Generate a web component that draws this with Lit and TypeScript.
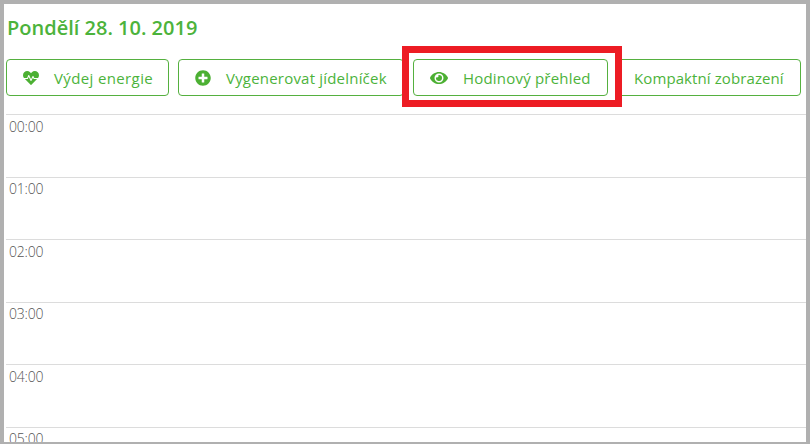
import { LitElement, html, css, svg } from 'lit';
import { customElement } from 'lit/decorators.js';
import { styleMap } from 'lit/directives/style-map.js';

const ICONS = {
  heartbeat: {
    box: '0 0 512 512',
    w: 16,
    d: 'M320.2 243.8l-49.7 99.4c-6 12.1-23.4 11.7-28.9-.6l-56.9-126.3-30 71.7H60.6l182.5 186.5c7.1 7.3 18.6 7.3 25.7 0L451.4 288H342.3l-22.1-44.2zM473.7 73.9l-2.4-2.5c-51.5-52.6-135.8-52.6-187.4 0L256 100l-27.9-28.5c-51.5-52.7-135.9-52.7-187.4 0l-2.4 2.4C-10.4 123.7-12.5 203 31 256h102.4l35.9-86.2c5.4-12.9 23.6-13.2 29.4-.4l58.2 129.3 49-97.9c5.9-11.8 22.7-11.8 28.6 0l27.6 55.2H481c43.5-53 41.4-132.3-7.3-182.1z',
  },
  plus: {
    box: '0 0 512 512',
    w: 16,
    d: 'M256 8C119 8 8 119 8 256s111 248 248 248 248-111 248-248S393 8 256 8zm144 276c0 6.6-5.4 12-12 12h-92v92c0 6.6-5.4 12-12 12h-56c-6.6 0-12-5.4-12-12v-92h-92c-6.6 0-12-5.4-12-12v-56c0-6.6 5.4-12 12-12h92v-92c0-6.6 5.4-12 12-12h56c6.6 0 12 5.4 12 12v92h92c6.6 0 12 5.4 12 12v56z',
  },
  eye: {
    box: '0 0 576 512',
    w: 18,
    d: 'M572.52 241.4C518.29 135.59 410.93 64 288 64S57.68 135.64 3.48 241.41a32.4 32.4 0 0 0 0 29.2C57.71 376.41 165.07 448 288 448s230.32-71.64 284.52-177.41a32.4 32.4 0 0 0 0-29.19zM288 400a144 144 0 1 1 144-144 143.93 143.93 0 0 1-144 144zm0-240a95.31 95.31 0 0 0-25.31 3.79 47.85 47.85 0 0 1-66.9 66.9A95.78 95.78 0 1 0 288 160z',
  },
};

type IconName = keyof typeof ICONS;

const BUTTONS: { label: string; width: number; tracking: number; icon?: IconName; marked?: boolean }[] = [
  { label: 'Výdej energie', width: 163, tracking: 0.37, icon: 'heartbeat' },
  { label: 'Vygenerovat jídelníček', width: 226, tracking: 0.2, icon: 'plus' },
  { label: 'Hodinový přehled', width: 195, tracking: 0.2, icon: 'eye', marked: true },
  { label: 'Kompaktní zobrazení', width: 184, tracking: 0.1 },
];

const HOURS = ['00:00', '01:00', '02:00', '03:00', '04:00', '05:00'];

@customElement('app-root')
export class AppRoot extends LitElement {
  static styles = css`
    :host {
      display: block;
      width: 810px;
      height: 444px;
      box-sizing: border-box;
      border: solid #b0b0b0;
      border-width: 4px 4px 2px 4px;
      background: #fff;
      overflow: hidden;
      font-family: 'Open Sans', sans-serif;
    }

    .page {
      padding-left: 2px;
    }

    h1 {
      margin: 0;
      padding: 10px 0 0 1px;
      font-size: 20px;
      line-height: 27px;
      font-weight: 600;
      color: #4cb33b;
    }

    .actions {
      display: flex;
      gap: 9px;
      margin-top: 18px;
    }

    .btn {
      position: relative;
      display: flex;
      flex: none;
      align-items: center;
      gap: 15px;
      height: 37px;
      box-sizing: border-box;
      padding: 0 16px;
      border: 1px solid #55b03f;
      border-radius: 4px;
      font-size: 15px;
      color: #4cb33b;
      white-space: nowrap;
    }

    .btn svg {
      display: block;
      flex: none;
      fill: #4cb033;
    }

    .mark {
      position: absolute;
      inset: -14px -15px -12px -12px;
      z-index: 1;
      border: 7px solid #ed1c24;
    }

    .grid {
      margin-top: 18px;
    }

    .row {
      height: 62.5px;
      box-sizing: border-box;
      border-top: 1px solid #dcdcdc;
      padding: 2.5px 0 0 3px;
      font-size: 14px;
      line-height: 18px;
      letter-spacing: -0.2px;
      font-weight: 300;
      color: #555;
    }
  `;

  private _icon(name: IconName) {
    const icon = ICONS[name];
    return html`<svg width="${icon.w}" height="16" viewBox="${icon.box}">${svg`<path d="${icon.d}"></path>`}</svg>`;
  }

  render() {
    return html`
      <div class="page">
        <h1>Pondělí 28. 10. 2019</h1>
        <div class="actions">
          ${BUTTONS.map((b) => html`
            <div class="btn" style=${styleMap({ width: `${b.width}px` })}>
              ${b.icon ? this._icon(b.icon) : ''}
              <span style=${styleMap({ letterSpacing: `${b.tracking}px` })}>${b.label}</span>
              ${b.marked ? html`<div class="mark"></div>` : ''}
            </div>
          `)}
        </div>
        <div class="grid">
          ${HOURS.map((h) => html`<div class="row">${h}</div>`)}
        </div>
      </div>
    `;
  }
}
